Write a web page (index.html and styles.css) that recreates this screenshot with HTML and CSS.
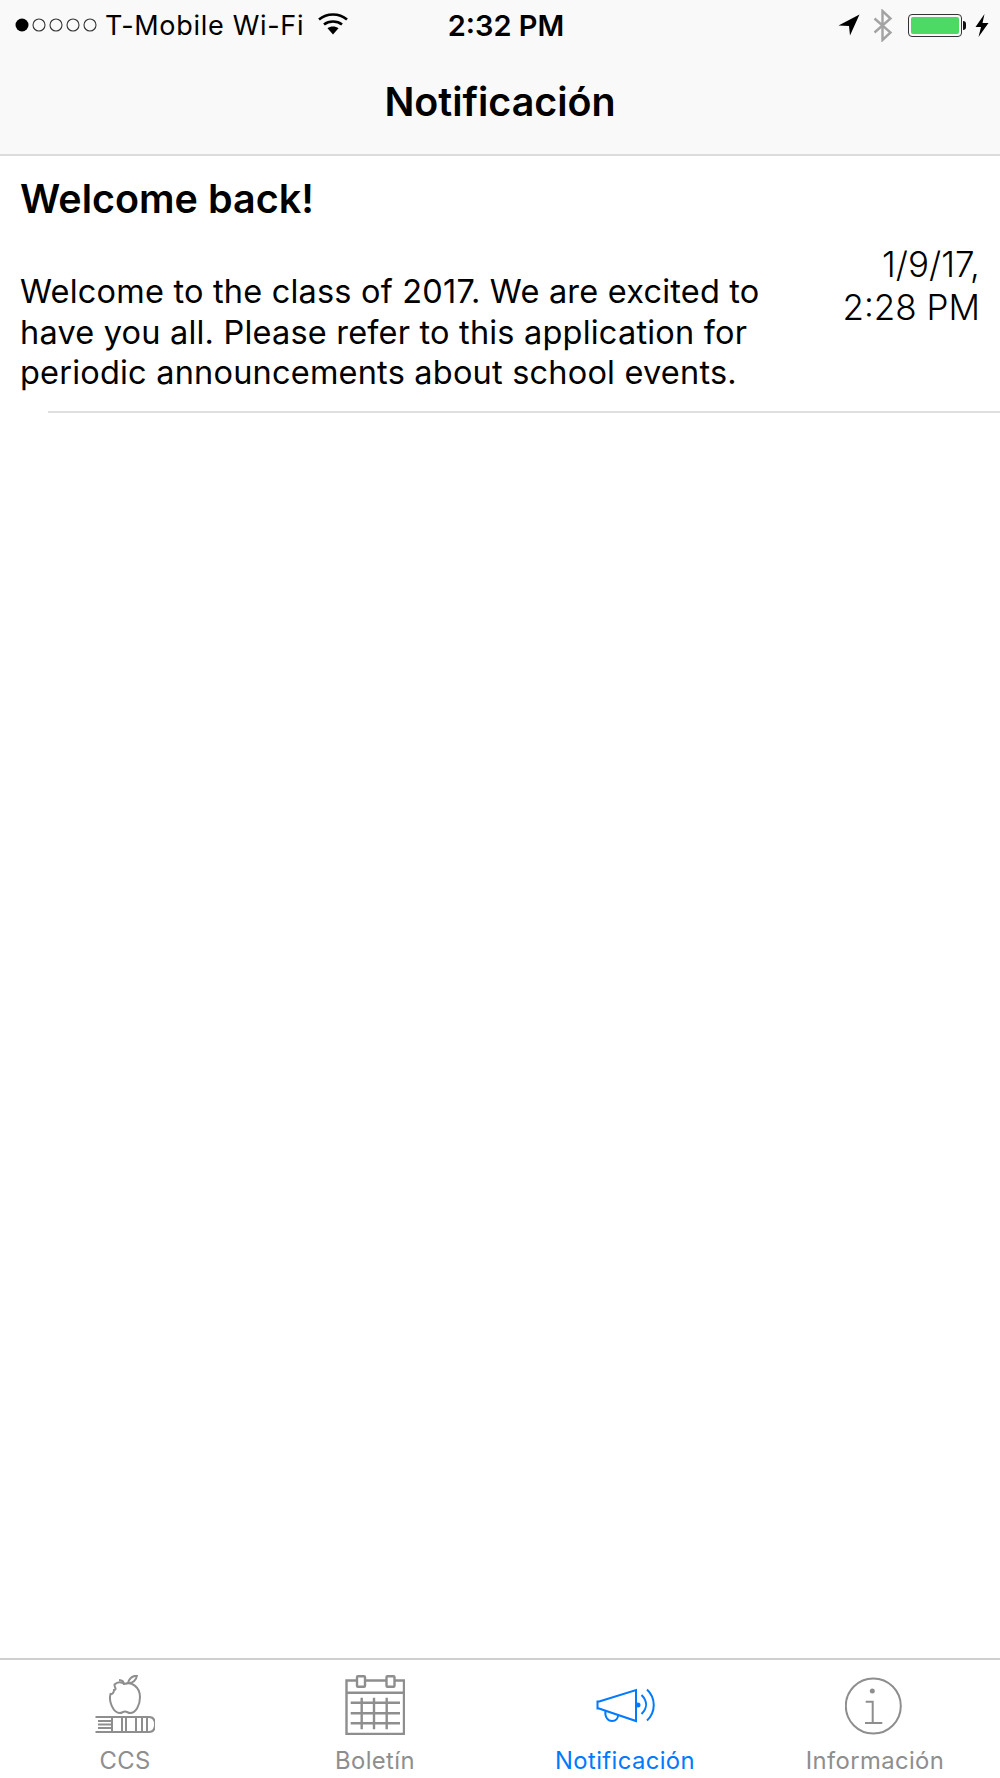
FILE: index.html
```html
<!DOCTYPE html>
<html lang="es">
<head>
<meta charset="utf-8">
<title>Notificación</title>
<link rel="stylesheet" href="styles.css">
</head>
<body>
<div class="screen">
  <header class="top">
    <div class="status">
      <div class="status-side">
        <svg class="signal" width="86" height="16" viewBox="0 0 86 16">
          <circle cx="8" cy="8" r="6.5" fill="#000"/>
          <g fill="none" stroke="#333" stroke-width="1.1">
            <circle cx="25" cy="8" r="6"/>
            <circle cx="42" cy="8" r="6"/>
            <circle cx="59" cy="8" r="6"/>
            <circle cx="76" cy="8" r="6"/>
          </g>
        </svg>
        <span class="carrier">T-Mobile Wi-Fi</span>
        <svg class="wifi" width="30" height="22" viewBox="0 0 30 22">
          <g fill="none" stroke="#000" stroke-width="2.6">
            <path d="M1 6.5C9 -0.2 21 -0.2 29 6.5"/>
            <path d="M6 11.5C11 7.5 19 7.5 24 11.5"/>
          </g>
          <path d="M9.5 15.2C12.5 13 17.5 13 20.5 15.2L15 21.5Z" fill="#000"/>
        </svg>
      </div>
      <span class="clock">2:32 PM</span>
      <div class="status-side status-right">
        <svg class="locate" width="22" height="22" viewBox="0 0 22 22">
          <path d="M0.5 11.5L21.5 0.5L12 21.5L11 12Z" fill="#000"/>
        </svg>
        <svg class="bt" width="20" height="33" viewBox="0 0 20 33">
          <path d="M1.5 9.5L17.5 23.5L9.5 31V2L17.5 9.5L1.5 23.5" fill="none" stroke="#a3a3a3" stroke-width="2.4"/>
        </svg>
        <div class="battery"><div class="battery-fill"></div></div>
        <svg class="bolt" width="14" height="23" viewBox="0 0 14 23">
          <path d="M9.5 0L0.5 13H6L3.5 23L13.5 9H7.5Z" fill="#000"/>
        </svg>
      </div>
    </div>
    <h1 class="nav-title">Notificación</h1>
  </header>

  <main class="list">
    <article class="item">
      <h2 class="item-title">Welcome back!</h2>
      <div class="item-row">
        <p class="item-body">Welcome to the class of 2017. We are excited to have you all. Please refer to this application for periodic announcements about school events.</p>
        <div class="item-date">1/9/17,<br>2:28 PM</div>
      </div>
    </article>
    <div class="rule"></div>
  </main>

  <nav class="tabs">
    <a class="tab">
      <svg class="tab-icon" width="60" height="60" viewBox="0 0 60 60">
        <g fill="none" stroke="currentColor" stroke-width="2">
          <path d="M30 9C26 6.500 22 7 19.500 9.500C19 12 22.500 14.500 19 15C19 18 17 19.500 15.500 19C13.500 26 18 38 25 38C27 38 28 36.500 30 36.500C32 36.500 33 38 35 38C41 38 45 30 45 22C45 12 36 6 30 9"/>
          <path d="M29 10C29 7 27 5 24 5"/>
          <path d="M33 8C34 4 37 1 42 0.500C41.500 4.500 38 8.500 33 8Z"/>
          <path d="M0.500 42H54C58 42 60 45 60 49.500C60 54 58 57 54 57H0.500"/>
          <path d="M3 46H17M3 49.500H17M3 53H17M17 42V57M27 42V57M31 42V57M41 42V57M47 42V57M52 42V57"/>
        </g>
      </svg>
      <span class="tab-label">CCS</span>
    </a>
    <a class="tab">
      <svg class="tab-icon" width="60" height="60" viewBox="0 0 60 60">
        <g fill="none" stroke="currentColor" stroke-width="2.400">
          <path d="M12 5.500H1.500V59H59V5.500H50M20 5.500H41"/>
          <rect x="12" y="1.200" width="8" height="10.500" rx="1"/>
          <rect x="41.500" y="1.200" width="8" height="10.500" rx="1"/>
          <path d="M1.500 17.700H59M5.700 27.700H55M5.700 38.300H55M5.700 48.300H55M16.700 22.700V54.300M29 22.700V54.300M41.700 22.700V54.300"/>
        </g>
      </svg>
      <span class="tab-label">Boletín</span>
    </a>
    <a class="tab tab-active">
      <svg class="tab-icon" width="60" height="60" viewBox="0 0 60 60">
        <g fill="none" stroke="currentColor" stroke-width="2">
          <path d="M2.500 25.500V34.500M2.500 27L41 15V46L2.500 33"/>
          <path d="M10.500 36C9.500 42 13 46 17 46C21 46 23.500 43 23 39.500"/>
          <path d="M46.500 20C52.500 26 52.500 33 46.500 39"/>
          <path d="M52 14.500C61 23 61 37 52 45.500"/>
        </g>
        <circle cx="43" cy="30" r="2.500" fill="currentColor"/>
      </svg>
      <span class="tab-label">Notificación</span>
    </a>
    <a class="tab">
      <svg class="tab-icon" width="60" height="60" viewBox="0 0 60 60">
        <g fill="none" stroke="currentColor" stroke-width="2">
          <circle cx="28.300" cy="31" r="27.500"/>
          <path d="M20.700 26.700H27.700V48M20 48H37.300"/>
        </g>
        <circle cx="27.300" cy="16" r="2.500" fill="currentColor"/>
      </svg>
      <span class="tab-label">Información</span>
    </a>
  </nav>
</div>
</body>
</html>
```

FILE: styles.css
```css
* {
  box-sizing: border-box;
}

html,
body {
  margin: 0;
  padding: 0;
  background: #fff;
}

body {
  font-family: Inter, "Liberation Sans", sans-serif;
  color: #000;
}

.screen {
  display: flex;
  flex-direction: column;
  height: 1778px;
  overflow: hidden;
}

/* status bar and navigation title */
.top {
  flex: none;
  height: 156px;
  background: #f9f9f9;
  border-bottom: 2px solid #dcdcdc;
}

.status {
  display: flex;
  align-items: center;
  height: 50px;
  padding: 0 11px 0 14px;
}

.status-side {
  flex: 1;
  display: flex;
  align-items: center;
}

.status-right {
  justify-content: flex-end;
}

.carrier {
  margin-left: 5px;
  font-size: 27px;
  letter-spacing: 0.7px;
}

.wifi {
  margin-left: 14px;
  margin-top: -3px;
}

.clock {
  margin-left: 9px;
  font-size: 29px;
  font-weight: 600;
}

.locate {
  margin-right: 13px;
}

.bt {
  margin-right: 15px;
}

.battery {
  position: relative;
  width: 54px;
  height: 23px;
  padding: 2px;
  border: 1px solid #333;
  border-radius: 4px;
  margin-right: 13px;
}

.battery::after {
  content: "";
  position: absolute;
  left: 54px;
  top: 6px;
  width: 3px;
  height: 9px;
  background: #111;
  border-radius: 0 3px 3px 0;
}

.battery-fill {
  height: 100%;
  background: #4cd964;
  border-radius: 2px;
}

.nav-title {
  margin: 0;
  height: 104px;
  padding-top: 28px;
  text-align: center;
  font-size: 39.400px;
  line-height: 48px;
  font-weight: 600;
}

/* notification list */
.list {
  flex: 1;
}

.item {
  padding: 20px 20px 0;
}

.item-title {
  margin: 0;
  font-size: 39.500px;
  line-height: 46px;
  font-weight: 600;
}

.item-row {
  display: flex;
  justify-content: space-between;
  margin-top: 21px;
}

.item-body {
  margin: 29px 0 0;
  width: 760px;
  font-size: 32.500px;
  line-height: 40.500px;
  letter-spacing: 0.2px;
}

.item-date {
  text-align: right;
  font-size: 35px;
  line-height: 43px;
  font-weight: 300;
}

.rule {
  height: 2px;
  margin: 17px 0 0 48px;
  background: #dfdfdf;
}

/* bottom tabs */
.tabs {
  flex: none;
  display: grid;
  grid-template-columns: repeat(4, 1fr);
  height: 120px;
  background: #fff;
  border-top: 2px solid #cfcfcf;
}

.tab {
  display: flex;
  flex-direction: column;
  align-items: center;
  padding-top: 15px;
  color: #8e8e8e;
}

.tab-active {
  color: #007aff;
}

.tab-icon {
  display: block;
}

.tab-label {
  margin-top: 12px;
  font-size: 23.800px;
  line-height: 28px;
  letter-spacing: 0.4px;
}
```
